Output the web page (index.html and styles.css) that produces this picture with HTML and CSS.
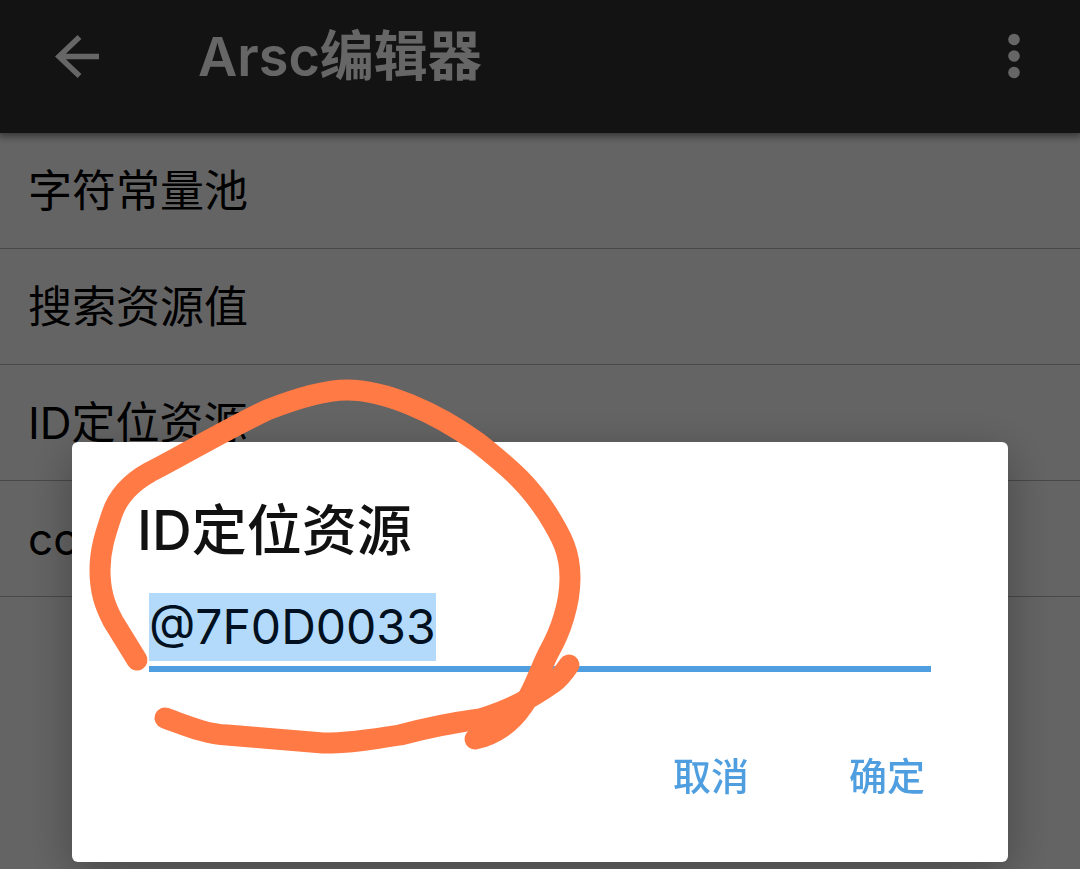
FILE: index.html
```
<!DOCTYPE html>
<html lang="zh-CN">
<head>
<meta charset="utf-8">
<meta name="viewport" content="width=device-width, initial-scale=1">
<title>Arsc编辑器</title>
<link rel="stylesheet" href="styles.css">
</head>
<body>
<header class="toolbar">
  <button class="icon-button" type="button" aria-label="返回">
    <svg class="icon" viewBox="0 0 48 48" aria-hidden="true"><path d="M27.500 4 7 23.500 27.500 43M7 23.500H47" fill="none" stroke="currentColor" stroke-width="5.500"/></svg>
  </button>
  <h1 class="toolbar-title">Arsc编辑器</h1>
  <button class="icon-button" type="button" aria-label="更多">
    <svg class="icon" viewBox="0 0 48 48" aria-hidden="true"><g fill="currentColor"><circle cx="24" cy="6.500" r="5.800"/><circle cx="24" cy="23" r="5.800"/><circle cx="24" cy="39.500" r="5.800"/></g></svg>
  </button>
</header>
<main>
  <ul class="list">
    <li class="list-item">字符常量池</li>
    <li class="list-item">搜索资源值</li>
    <li class="list-item">ID定位资源</li>
    <li class="list-item">co</li>
  </ul>
</main>
<div class="scrim">
  <form class="dialog" role="dialog" aria-labelledby="dialog-title">
    <label class="dialog-title" id="dialog-title" for="resource-id">ID定位资源</label>
    <input class="field" id="resource-id" type="text" value="@7F0D0033" autocomplete="off" spellcheck="false">
    <div class="actions">
      <button class="action" type="button">取消</button>
      <button class="action" type="button">确定</button>
    </div>
    <svg class="scribble" viewBox="85 375 500 385" aria-hidden="true">
      <g fill="none" stroke="#ff7a45" stroke-width="21" stroke-linecap="round" stroke-linejoin="round">
        <path d="M137 660 113 621C104 604 100 590 100 570C100 550 105 535 112 514C118 496 132 482 150 472C185 454 225 430 267 410C295 399 325 390 347 390C385 390 435 412 477 442C515 472 530 487 547 513C562 537 570 552 570 578C570 605 560 632 550 650C540 668 535 690 522 707C512 722 495 735 475 739"/>
        <path d="M165 718C185 725 205 734 227 735L323 743C350 743 375 739 400 735C430 727 450 723 480 719C510 710 530 699 553 683C560 678 565 671 569 665"/>
        <path d="M482 727 508 716"/>
      </g>
    </svg>
  </form>
</div>
<script src="script.js"></script>
</body>
</html>
```
FILE: styles.css
```
* {
  box-sizing: border-box;
}

body {
  margin: 0;
  min-height: 100vh;
  background: #fafafa;
  color: #000;
  font-family: Inter, "Noto Sans CJK SC", sans-serif;
}

button,
input {
  font-family: inherit;
}

.toolbar {
  display: flex;
  align-items: center;
  position: relative;
  padding: 16px 42px 36px 52px;
  background: #303030;
  color: #fff;
  box-shadow: 0 1px 8px 2px rgba(0, 0, 0, 0.5);
}

.icon-button {
  display: flex;
  padding: 0;
  border: 0;
  background: none;
  color: inherit;
}

.icon {
  width: 48px;
  height: 48px;
}

.toolbar-title {
  flex: 1;
  margin: 0;
  padding-left: 98px;
  font-size: 54px;
  font-weight: 600;
  line-height: 81px;
}

.list {
  margin: 0;
  padding: 0;
  list-style: none;
}

.list-item {
  padding: 26px 28px 25px;
  border-bottom: 1px solid #b4b4b4;
  font-size: 44px;
  line-height: 64px;
}

.scrim {
  display: flex;
  position: fixed;
  inset: 0;
  align-items: flex-end;
  padding: 0 72px 7px;
  background: rgba(0, 0, 0, 0.6);
}

.dialog {
  display: flex;
  flex: 1;
  flex-direction: column;
  position: relative;
  padding: 48px 77px 58px 65px;
  border-radius: 6px;
  background: #fff;
  box-shadow: 0 12px 48px rgba(0, 0, 0, 0.3);
}

.dialog-title {
  color: #111;
  font-size: 55px;
  font-weight: 500;
  line-height: 80px;
}

.field {
  align-self: stretch;
  min-width: 0;
  margin: 23px 0 0 12px;
  padding: 0 0 5px;
  border: 0;
  border-bottom: 6px solid #4f9fe0;
  border-radius: 0;
  outline: 0;
  background: none;
  color: #001020;
  font-size: 48px;
  line-height: 68px;
}

.field::selection {
  background: #b3dafa;
  color: #001020;
}

.actions {
  display: flex;
  justify-content: flex-end;
  gap: 100px;
  padding: 76px 6px 0 0;
}

.action {
  padding: 0;
  border: 0;
  background: none;
  color: #4f9fe0;
  font-size: 38px;
  font-weight: 500;
  line-height: 56px;
}

.scribble {
  position: absolute;
  top: -67px;
  left: 13px;
  width: 500px;
  height: 385px;
  pointer-events: none;
}
```
FILE: script.js
```
const field = document.getElementById("resource-id");
field.focus();
field.select();
```
